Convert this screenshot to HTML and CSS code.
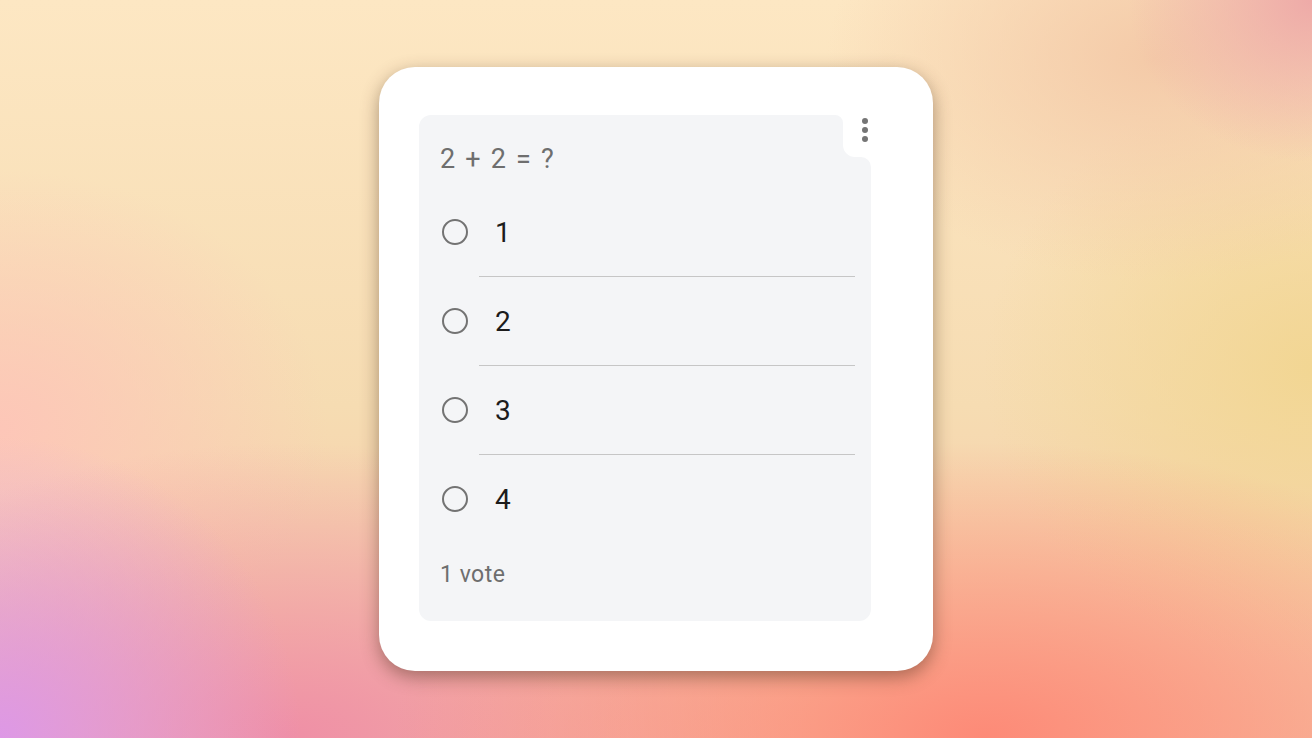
FILE: index.html
```html
<!DOCTYPE html>
<html lang="en">
<head>
<meta charset="utf-8">
<title>Poll</title>
<link rel="stylesheet" href="styles.css">
</head>
<body>
<main class="stage">
  <section class="card">
    <button class="menu" aria-label="More options">
      <svg width="24" height="24" viewBox="0 0 24 24"><circle cx="12" cy="3" r="3"/><circle cx="12" cy="12" r="3"/><circle cx="12" cy="21" r="3"/></svg>
    </button>
    <div class="panel">
      <h1 class="question">2 + 2 = ?</h1>
      <div class="options">
        <label class="option"><span class="radio"></span><span class="label">1</span></label>
        <div class="divider"></div>
        <label class="option"><span class="radio"></span><span class="label">2</span></label>
        <div class="divider"></div>
        <label class="option"><span class="radio"></span><span class="label">3</span></label>
        <div class="divider"></div>
        <label class="option"><span class="radio"></span><span class="label">4</span></label>
      </div>
      <p class="votes">1 vote</p>
    </div>
  </section>
</main>
</body>
</html>
```
FILE: styles.css
```css
* { box-sizing: border-box; }
html, body { margin: 0; height: 100%; }
body {
  font-family: Roboto, "Noto Sans", sans-serif;
  background-color: #f8dcb8;
  background-image:
    radial-gradient(circle at 0% 100%, #dd98e6 0, rgba(221,152,230,0) 20%),
    radial-gradient(ellipse 45% 40% at 75% 100%, #fd8a77 0, rgba(253,138,119,0) 100%),
    radial-gradient(ellipse 40% 40% at 22% 100%, #ef8fa6 0, rgba(239,143,166,0) 100%),
    radial-gradient(ellipse 14% 22% at 100% 0%, #eeaaa8 0, rgba(238,170,168,0) 100%),
    radial-gradient(ellipse 25% 30% at 88% 8%, #f4caa8 0, rgba(244,202,168,0) 100%),
    radial-gradient(ellipse 25% 40% at 100% 50%, #f2d693 0, rgba(242,214,147,0) 100%),
    radial-gradient(ellipse 25% 35% at 0% 58%, #fdc6b8 0, rgba(253,198,184,0) 100%),
    linear-gradient(180deg, #fde7c3 0%, #f6dcb2 55%, #f6c3a4 100%);
  overflow: hidden;
}
.stage {
  height: 100%;
  display: flex;
  align-items: center;
  justify-content: center;
}
.card {
  position: relative;
  width: 554px;
  height: 604px;
  padding: 48px 62px 50px 40px;
  background: #fff;
  border-radius: 36px;
  box-shadow: 0 6px 18px rgba(70, 45, 25, 0.45);
}
.menu {
  position: absolute;
  left: 474px;
  top: 51px;
  width: 24px;
  height: 24px;
  padding: 0;
  border: 0;
  background: none;
}
.menu svg { display: block; fill: #757575; }
.panel {
  width: 452px;
  height: 506px;
  background: #f4f5f7;
  padding: 28px 16px 32px 21px;
  clip-path: path('M 12 0 H 416 A 8 8 0 0 1 424 8 V 30 A 12 12 0 0 0 436 42 H 442 A 10 10 0 0 1 452 52 V 494 A 12 12 0 0 1 440 506 H 12 A 12 12 0 0 1 0 494 V 12 A 12 12 0 0 1 12 0 Z');
}
.question {
  margin: 0 0 13px;
  font-size: 27px;
  line-height: 32px;
  font-weight: 400;
  color: #6e6e6e;
  letter-spacing: 0.8px;
  word-spacing: 1.8px;
}
.options { display: flex; flex-direction: column; }
.option {
  height: 88px;
  display: flex;
  align-items: center;
  gap: 27px;
  padding-left: 2px;
}
.radio {
  width: 26px;
  height: 26px;
  border: 2.6px solid #737373;
  border-radius: 50%;
  flex: none;
}
.label {
  font-size: 28px;
  color: #1c1c1c;
}
.divider {
  height: 1px;
  background: #c6c6c6;
  margin-left: 39px;
}
.votes {
  margin: 18px 0 0;
  font-size: 23px;
  line-height: 28px;
  color: #6e6e6e;
  letter-spacing: 0.5px;
}
```
